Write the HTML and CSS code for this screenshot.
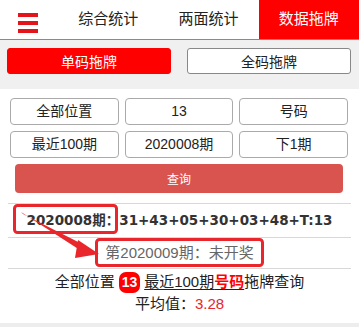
FILE: index.html
```html
<!DOCTYPE html>
<html lang="zh-CN">
<head>
    <meta charset="UTF-8">
    <meta name="viewport" content="width=device-width, initial-scale=1.0">
    <title>数据拖牌</title>
    <link rel="stylesheet" href="styles.css">
</head>
<body>
    <header class="topnav">
        <div class="menu">
            <svg width="20" height="20" viewBox="0 0 20 20">
                <rect x="0" y="0" width="20" height="4" fill="#e3151b"/>
                <rect x="0" y="8" width="20" height="4" fill="#e3151b"/>
                <rect x="0" y="16" width="20" height="4" fill="#e3151b"/>
            </svg>
        </div>
        <a class="tab">综合统计</a>
        <a class="tab">两面统计</a>
        <a class="tab active">数据拖牌</a>
    </header>

    <div class="switch">
        <button class="switch-btn active">单码拖牌</button>
        <button class="switch-btn">全码拖牌</button>
    </div>

    <div class="filters">
        <div class="select">全部位置</div>
        <div class="select">13</div>
        <div class="select">号码</div>
        <div class="select">最近100期</div>
        <div class="select">2020008期</div>
        <div class="select">下1期</div>
    </div>
    <button class="query">查询</button>

    <div class="result">
        <div class="row row-draw">2020008期：31+43+05+30+03+48+T:13</div>
        <div class="row row-next">第2020009期：未开奖</div>
        <div class="row row-info">
            <p>全部位置 <span class="ball">13</span> <u>最近100期<b class="red">号码</b></u>拖牌查询</p>
            <p>平均值：<span class="red">3.28</span></p>
        </div>
    </div>
    <div class="footer-bar"></div>

    <!-- annotation marks -->
    <svg class="marks" width="359" height="327" viewBox="0 0 359 327">
        <rect x="14.5" y="205.5" width="102" height="27" rx="3" fill="none" stroke="#e8262b" stroke-width="3"/>
        <rect x="96.5" y="239.5" width="166" height="26" rx="3" fill="none" stroke="#e8262b" stroke-width="3"/>
        <polygon points="21,212 23,214 86,246 83,252" fill="#e8262b"/>
        <polygon points="78,240 99,254 75,258" fill="#e8262b"/>
    </svg>
</body>
</html>
```

FILE: styles.css
```css
body {
    font-family: "Liberation Sans", "Noto Sans CJK SC", sans-serif;
    margin: 0;
    padding: 0;
    color: #222;
    background-color: white;
    position: relative;
    width: 359px;
    height: 327px;
    overflow: hidden;
}

.topnav {
    display: flex;
    height: 39px;
    border-bottom: 1px solid #8a8a8a;
}

.menu {
    width: 58px;
    display: flex;
    align-items: center;
    justify-content: center;
    padding-top: 6px;
    box-sizing: border-box;
    padding-right: 2px;
}

.tab {
    flex: 1;
    text-align: center;
    line-height: 38px;
    font-size: 15px;
    color: #222;
}

.tab.active {
    background-color: #ff0000;
    color: white;
}

.switch {
    background-color: #f0f0f0;
    padding: 8px 8px 15px 7px;
    display: grid;
    grid-template-columns: 1fr 1fr;
    gap: 16px;
}

.switch-btn {
    height: 26px;
    font-family: inherit;
    font-size: 14px;
    border-radius: 3px;
    border: 1px solid #888;
    background: white;
    color: #222;
    padding: 0;
}

.switch-btn.active {
    background-color: #ff0000;
    border-color: #ff0000;
    color: white;
}

.filters {
    display: grid;
    grid-template-columns: repeat(3, 1fr);
    gap: 6px;
    padding: 9px 11px 0 10px;
}

.select {
    height: 27px;
    line-height: 25px;
    box-sizing: border-box;
    border: 1px solid #aaa;
    border-radius: 4px;
    text-align: center;
    font-size: 14px;
}

.query {
    display: block;
    width: 328px;
    height: 29px;
    margin: 6px 0 0 15px;
    background-color: #d9534f;
    border: none;
    border-radius: 4px;
    color: white;
    font-family: inherit;
    font-size: 12px;
}

.result {
    margin: 10px 8px 0 8px;
    border-top: 1px solid #d8d8d8;
}

.row {
    text-align: center;
    border-bottom: 1px solid #d8d8d8;
}

.row-draw {
    height: 33px;
    line-height: 32px;
    font-family: "DejaVu Sans", "Noto Sans CJK SC", sans-serif;
    font-size: 13.5px;
    font-weight: bold;
    color: #333;
}

.row-next {
    height: 30px;
    line-height: 29px;
    font-size: 15px;
    color: #666;
}

.row-info {
    height: 52px;
    padding-top: 2px;
    font-size: 15px;
    border-bottom: none;
}

.row-info p {
    margin: 0;
    line-height: 21px;
}

.ball {
    display: inline-block;
    width: 21px;
    height: 21px;
    line-height: 21px;
    border-radius: 7px;
    background-color: #ff0000;
    color: white;
    font-weight: bold;
    font-size: 14px;
}

u {
    text-underline-offset: 2px;
}

.red {
    color: #e8262b;
}

b.red {
    color: #ff0000;
}

.footer-bar {
    height: 6px;
    background-color: #ededed;
}

.marks {
    position: absolute;
    top: 0;
    left: 0;
    pointer-events: none;
}
```
